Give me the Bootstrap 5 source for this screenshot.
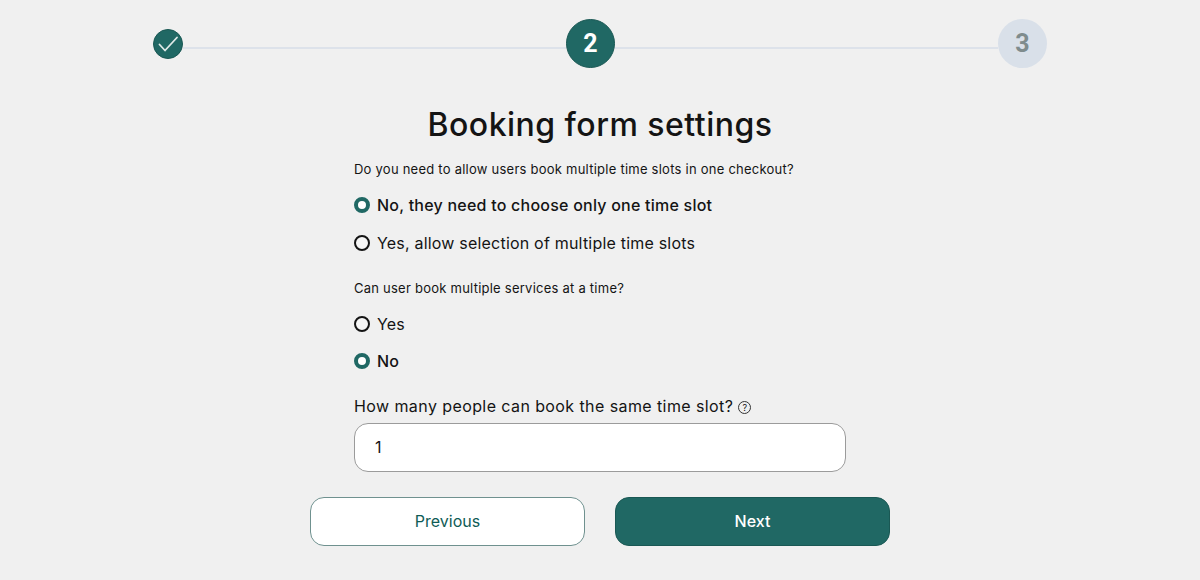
<!DOCTYPE html>
<html lang="en">
<head>
<meta charset="utf-8">
<title>Booking form settings</title>
<link href="https://cdn.jsdelivr.net/npm/bootstrap@5.3.0/dist/css/bootstrap.min.css" rel="stylesheet">
<style>
html,body{height:580px;overflow:hidden}
body{background:#f0f0f0;font-family:"Inter","Liberation Sans",sans-serif;color:#141414}
.stepper{width:894px;padding-top:19px}
.step-dot{flex:none;border-radius:50%;font-weight:700;font-family:"Roboto",sans-serif}
.step-done{width:30px;height:30px;background:#206864;border:1px solid #1a5854}
.step-now{width:49px;height:49px;background:#206864;border:1px solid #1a5854;color:#fff;font-size:25px}
.step-next{width:49px;height:49px;background:#d9e0e9;color:#7f8c8d;font-size:25px}
.step-line{height:2px;background:#dde2ea;margin-top:8px}
.page-title{font-size:32px;font-weight:500;line-height:40px;margin:37px 0 0;letter-spacing:.48px;color:#141414}
.form-zone{width:492px}
.ask{font-size:13px;line-height:18px;letter-spacing:.24px;color:#141414;margin:0}
.ask-top{margin-top:15px}
.ask-mid{margin-top:25px}
.pick{font-size:16px;line-height:22px;letter-spacing:.2px;min-height:0;margin:0;padding:0;color:#141414;gap:7px}
.pick.is-on{font-weight:450;letter-spacing:.23px}
.pick-a{margin-top:15px}
.pick-b{margin-top:16px}
.pick .form-check-input{float:none;margin:0;flex:none;width:16px;height:16px;border:2px solid #141414;background-color:#f6f6f6}
.pick .form-check-input:checked{background-color:#fff;background-image:none;border:4px solid #206864}
.count-label{font-size:16px;line-height:22px;letter-spacing:.41px;margin:23px 0 6px}
.hint{width:13px;height:13px;border:1px solid #333;border-radius:50%;font-size:9px;line-height:11px;letter-spacing:0;text-align:center;margin-left:5px;vertical-align:1px}
.count-input{height:49px;border:1px solid #9b9b9b;border-radius:14px;font-size:16px;padding:0 20px 2px;color:#141414;background:#fff}
.btn-row{width:580px;margin-top:25px}
.act{width:275px;height:49px;border-radius:14px;font-size:16px;padding:0 0 2px}
.act-back{background:#fff;border:1px solid #6f918f;color:#0f5c56}
.act-go{background:#206864;border:1px solid #1a5854;color:#fff;font-weight:500}
</style>
</head>
<body>
<div class="stepper mx-auto d-flex align-items-center">
  <div class="step-dot step-done d-flex align-items-center justify-content-center">
    <svg width="22" height="22" viewBox="0 0 22 22" fill="none" stroke="#dfe9e7" stroke-width="1.8" stroke-linecap="round" stroke-linejoin="round"><path d="M2.5 11.5l5.5 6 12-13"/></svg>
  </div>
  <div class="step-line flex-grow-1"></div>
  <div class="step-dot step-now d-flex align-items-center justify-content-center">2</div>
  <div class="step-line flex-grow-1"></div>
  <div class="step-dot step-next d-flex align-items-center justify-content-center">3</div>
</div>
<h1 class="page-title text-center">Booking form settings</h1>
<form class="form-zone mx-auto">
  <p class="ask ask-top">Do you need to allow users book multiple time slots in one checkout?</p>
  <label class="pick pick-b is-on form-check d-flex align-items-center"><input class="form-check-input" type="radio" name="slots" checked>No, they need to choose only one time slot</label>
  <label class="pick pick-b form-check d-flex align-items-center"><input class="form-check-input" type="radio" name="slots">Yes, allow selection of multiple time slots</label>
  <p class="ask ask-mid">Can user book multiple services at a time?</p>
  <label class="pick pick-b form-check d-flex align-items-center"><input class="form-check-input" type="radio" name="many">Yes</label>
  <label class="pick pick-a is-on form-check d-flex align-items-center"><input class="form-check-input" type="radio" name="many" checked>No</label>
  <label class="count-label d-block" for="cnt">How many people can book the same time slot?<span class="hint d-inline-block">?</span></label>
  <input id="cnt" class="count-input form-control" type="text" value="1">
</form>
<div class="btn-row mx-auto d-flex justify-content-between">
  <button type="button" class="act act-back btn">Previous</button>
  <button type="button" class="act act-go btn">Next</button>
</div>
<script src="https://cdn.jsdelivr.net/npm/bootstrap@5.3.0/dist/js/bootstrap.bundle.min.js"></script>
</body>
</html>
